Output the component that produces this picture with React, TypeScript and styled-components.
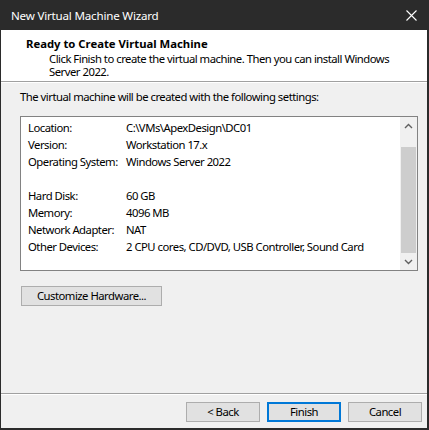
import React from "react";
import styled, { createGlobalStyle } from "styled-components";

const Global = createGlobalStyle`
  html, body { margin: 0; padding: 0; background: #2b2b2b; }
  body { font-family: "Noto Sans", "Segoe UI", sans-serif; }
`;

const FONT = `"Noto Sans", "Segoe UI", sans-serif`;

const Frame = styled.div`
  width: 429px;
  height: 430px;
  box-sizing: border-box;
  background: #2b2b2b;
  padding: 0 2px 2px 1px;
  display: flex;
  flex-direction: column;
  font-family: ${FONT};
  font-size: 11.3px;
  letter-spacing: -0.5px;
  color: #000;
`;

const TitleBar = styled.div`
  height: 30px;
  flex: none;
  display: flex;
  align-items: center;
  justify-content: space-between;
  padding-left: 10px;
  padding-right: 10px;
  color: #ffffff;
  font-size: 11.6px;
  letter-spacing: -0.2px;
`;

const CloseIcon = styled.svg`
  width: 11px;
  height: 11px;
  display: block;
`;

const Client = styled.div`
  flex: 1;
  display: flex;
  flex-direction: column;
  background: #f0f0f0;
`;

const Header = styled.div`
  height: 52px;
  background: #ffffff;
  box-sizing: border-box;
  padding: 6px 0 0 25px;
  border-bottom: 1px solid #a0a0a0;
`;

const HeaderTitle = styled.div`
  font-weight: bold;
  line-height: 16px;
  letter-spacing: 0;
`;

const HeaderText = styled.div`
  padding-left: 23px;
  line-height: 13px;
  width: 352px;
`;

const Divider = styled.div`
  height: 1px;
  background: #ffffff;
`;

const Body = styled.div`
  flex: 1;
  padding: 6px 10px 0 19px;
  display: flex;
  flex-direction: column;
  align-items: flex-start;
`;

const Intro = styled.div`
  line-height: 16px;
`;

const ListBox = styled.div`
  margin-top: 11px;
  width: 398px;
  height: 155px;
  box-sizing: border-box;
  border: 1px solid #828282;
  background: #ffffff;
  display: flex;
`;

const Rows = styled.div`
  flex: 1;
  padding: 2px 0 0 7px;
`;

const Row = styled.div`
  display: grid;
  grid-template-columns: 98px 1fr;
  height: 17px;
  line-height: 17px;
  white-space: nowrap;
`;

const ScrollBar = styled.div`
  width: 17px;
  display: flex;
  flex-direction: column;
  background: #f0f0f0;
`;

const ScrollButton = styled.div`
  height: 17px;
  display: flex;
  align-items: center;
  justify-content: center;
  flex: none;
`;

const Track = styled.div`
  flex: 1;
  display: flex;
  flex-direction: column;
`;

const Thumb = styled.div`
  margin: 13px 1px 0 1px;
  flex: 1;
  background: #cdcdcd;
`;

const Button = styled.button<{ $default?: boolean; $w?: number }>`
  width: ${(p) => p.$w ?? 74}px;
  height: 20px;
  box-sizing: border-box;
  background: #e1e1e1;
  border: ${(p) => (p.$default ? "2px solid #0078d7" : "1px solid #adadad")};
  font-family: ${FONT};
  font-size: 11.3px;
  letter-spacing: -0.5px;
  color: #000;
  padding: 0;
  line-height: 16px;
  cursor: default;
`;

const CustomizeButton = styled(Button)`
  margin-top: 15px;
  margin-left: 1px;
`;

const Footer = styled.div`
  height: 35px;
  flex: none;
  border-top: 1px solid #a0a0a0;
  box-sizing: border-box;
  display: flex;
  flex-direction: column;
`;

const ButtonRow = styled.div`
  display: flex;
  justify-content: flex-end;
  gap: 7px;
  padding: 7px 5px 0 0;
`;

const Chevron = ({ up }: { up?: boolean }) => (
  <svg width="9" height="6" viewBox="0 0 9 6">
    <path
      d={up ? "M1 5 L4.5 1.5 L8 5" : "M1 1 L4.5 4.5 L8 1"}
      fill="none"
      stroke="#606060"
      strokeWidth="1.4"
    />
  </svg>
);

const rows: [string, string][] = [
  ["Location:", "C:\\VMs\\ApexDesign\\DC01"],
  ["Version:", "Workstation 17.x"],
  ["Operating System:", "Windows Server 2022"],
  ["", ""],
  ["Hard Disk:", "60 GB"],
  ["Memory:", "4096 MB"],
  ["Network Adapter:", "NAT"],
  ["Other Devices:", "2 CPU cores, CD/DVD, USB Controller, Sound Card"],
];

export default function App() {
  return (
    <>
      <Global />
      <Frame>
        <TitleBar>
          <span>New Virtual Machine Wizard</span>
          <CloseIcon viewBox="0 0 11 11">
            <path d="M0.5 0.5 L10.5 10.5 M10.5 0.5 L0.5 10.5" stroke="#ffffff" strokeWidth="1.1" />
          </CloseIcon>
        </TitleBar>
        <Client>
          <Header>
            <HeaderTitle>Ready to Create Virtual Machine</HeaderTitle>
            <HeaderText>
              Click Finish to create the virtual machine. Then you can install Windows Server 2022.
            </HeaderText>
          </Header>
          <Divider />
          <Body>
            <Intro>The virtual machine will be created with the following settings:</Intro>
            <ListBox>
              <Rows>
                {rows.map(([k, v], i) => (
                  <Row key={i}>
                    <span>{k}</span>
                    <span>{v}</span>
                  </Row>
                ))}
              </Rows>
              <ScrollBar>
                <ScrollButton>
                  <Chevron up />
                </ScrollButton>
                <Track>
                  <Thumb />
                </Track>
                <ScrollButton>
                  <Chevron />
                </ScrollButton>
              </ScrollBar>
            </ListBox>
            <CustomizeButton $w={141}>Customize Hardware...</CustomizeButton>
          </Body>
          <Footer>
            <Divider />
            <ButtonRow>
              <Button>&lt; Back</Button>
              <Button $default>Finish</Button>
              <Button>Cancel</Button>
            </ButtonRow>
          </Footer>
        </Client>
      </Frame>
    </>
  );
}
